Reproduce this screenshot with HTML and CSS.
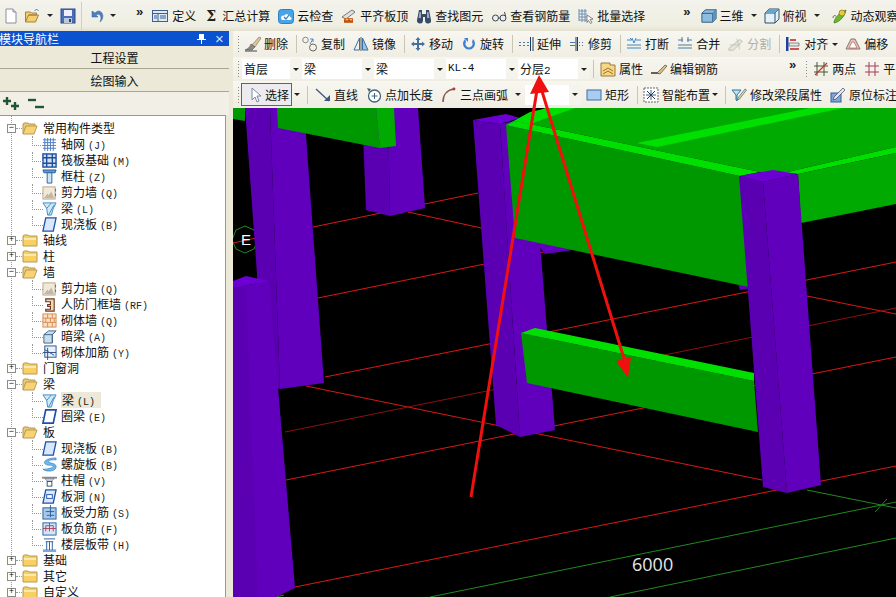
FILE: index.html
```html
<!DOCTYPE html>
<html lang="zh">
<head>
<meta charset="utf-8">
<title>模块导航栏</title>
<link rel="stylesheet" href="styles.css">
</head>
<body>
<svg class="defs" width="0" height="0">
  <symbol id="i-new" viewBox="0 0 16 16"><path d="M3 1h7l3 3v11H3z" fill="#fff" stroke="#8a8f9a"/><path d="M10 1v3h3" fill="#dde" stroke="#8a8f9a"/></symbol>
  <symbol id="i-open" viewBox="0 0 16 16"><path d="M1 14V4h5l1 1h5v2H4l-3 7h10l3-7H4" fill="#f3cf72" stroke="#a5813a"/><path d="M10 3c1-2 3-2 4 0" fill="none" stroke="#4a7fd0"/></symbol>
  <symbol id="i-save" viewBox="0 0 16 16"><rect x="1" y="1" width="14" height="14" fill="#4a6fb8" stroke="#2a4a8a"/><rect x="4" y="2" width="8" height="6" fill="#eef"/><rect x="4" y="10" width="8" height="5" fill="#bcc6dc"/><rect x="9" y="11" width="2" height="3" fill="#345"/></symbol>
  <symbol id="i-undo" viewBox="0 0 16 16"><path d="M3 3v6h6L7 7c3-2 5 0 5 4l-1 3c4-3 4-10-1-11-2 0-3 1-4 2z" fill="#4f7fc0" stroke="#345f9f" stroke-width=".5"/></symbol>
  <symbol id="i-define" viewBox="0 0 16 16"><rect x=".5" y="2.5" width="15" height="11" fill="#dfe8f6" stroke="#3c5f90"/><path d="M1 5.5h14M6 5.5v8M8 8h6M8 10h6M2 8h3M2 10h3" stroke="#3c5f90" fill="none"/></symbol>
  <symbol id="i-cloud" viewBox="0 0 16 16"><rect x=".5" y="1.5" width="15" height="14" rx="3" fill="#45a5e6" stroke="#2f7ec0"/><path d="M3 10c0-2 2-3 3-2 1-3 6-2 6 1 2 0 2 3 0 3H5c-2 0-2-2-2-2z" fill="#fff"/><path d="M6 9l2 2 3-4" fill="none" stroke="#2f7ec0" stroke-width="1.2"/></symbol>
  <symbol id="i-align" viewBox="0 0 16 16"><path d="M1 9l10-7 3 2-9 7z" fill="#dfe2e6" stroke="#777"/><path d="M3 10h9v5H3z" fill="#c9702a"/><path d="M5 11h2v2H5zm4 0h2v2H9z" fill="#e8d23a"/><path d="M3 13h9" stroke="#b22"/></symbol>
  <symbol id="i-binoc" viewBox="0 0 16 16"><path d="M3 2h3v4h4V2h3l2 10a2.500 2.500 0 0 1-6 1V9H7v4a2.500 2.500 0 0 1-6-1z" fill="#374a66"/><path d="M3.500 4h1.500v6H2.500zM11 4h1.500l1 6H11z" fill="#9ab"/></symbol>
  <symbol id="i-glass" viewBox="0 0 16 16"><circle cx="4.500" cy="10" r="3" fill="#e8eef8" stroke="#444"/><circle cx="12" cy="10" r="3" fill="#e8eef8" stroke="#444"/><path d="M7.500 10h1.500M14.500 8l-1-4" stroke="#444" fill="none"/></symbol>
  <symbol id="i-batch" viewBox="0 0 16 16"><path d="M1 1v12M1 3h8M1 6h8M1 9h8M1 12h8M4 1v13M7 1v13" stroke="#6f8fb8" fill="none"/><path d="M9 7l6 4-3 .5 2 3-1.500 1-2-3-1.500 2z" fill="#fff" stroke="#555" stroke-width=".7"/></symbol>
  <symbol id="i-cube" viewBox="0 0 18 16"><path d="M1 5l4-4h12v10l-4 4H1z" fill="#8dbde0" stroke="#2b5070"/><path d="M1 5h12v10M13 5l4-4" fill="none" stroke="#2b5070"/><path d="M13 5l4-4v10l-4 4z" fill="#5d93bd"/></symbol>
  <symbol id="i-cube2" viewBox="0 0 16 16"><path d="M1 5l4-4h10v10l-4 4H1z" fill="#e3f0f8" stroke="#2b5070"/><path d="M1 5h10v10M11 5l4-4" fill="none" stroke="#2b5070"/><path d="M5 1h10l-4 4H1z" fill="#6aa4cc"/></symbol>
  <symbol id="i-orbit" viewBox="0 0 16 16"><path d="M2 15c0-5 6-11 12-13-1 6-6 12-12 13z" fill="#6fb82e" stroke="#3a7a18" stroke-width=".7"/><circle cx="10" cy="5" r="3" fill="#e8c83c" stroke="#8a7415" stroke-width=".7"/><path d="M4 8c-2-1-3 0-3 2" fill="none" stroke="#666"/></symbol>
  <symbol id="i-del" viewBox="0 0 18 16"><path d="M8 9L15 1l2 1-6 9z" fill="#d9c9a0" stroke="#8a7a55" stroke-width=".7"/><path d="M7 8l4 3-3 3H1c3-1 5-3 6-6z" fill="#8a8a8a" stroke="#555" stroke-width=".6"/><path d="M1 15h12" stroke="#444"/></symbol>
  <symbol id="i-copy" viewBox="0 0 16 16"><circle cx="3.500" cy="4" r="2.800" fill="none" stroke="#888"/><circle cx="11" cy="11.500" r="3.500" fill="none" stroke="#666"/><path d="M8 3l3 0 0 3M8 8l3-5" fill="none" stroke="#5a86c0"/></symbol>
  <symbol id="i-mirror" viewBox="0 0 16 16"><path d="M6.500 2L1 14h5.500z" fill="none" stroke="#3a6ea8"/><path d="M9.500 2L15 14H9.500z" fill="#9cc0e4" stroke="#3a6ea8"/><path d="M8 1v14" stroke="#555"/></symbol>
  <symbol id="i-move" viewBox="0 0 16 16"><path d="M8 1l2.500 3H9v3h3V5.500L15 8l-3 2.500V9H9v3h1.500L8 15l-2.500-3H7V9H4v1.500L1 8l3-2.500V7h3V4H5.500z" fill="#44709f"/></symbol>
  <symbol id="i-rotate" viewBox="0 0 16 16"><path d="M4 3a6 6 0 1 0 8 0l-1 3a3.500 3.500 0 1 1-6 0z" fill="#3f80d0"/><path d="M3 2h4v4z" fill="#3f80d0"/></symbol>
  <symbol id="i-extend" viewBox="0 0 16 16"><path d="M1 6.500h2M5 6.500h2M9 6.500h2M1 9.500h2M5 9.500h2M9 9.500h2" stroke="#4a78a8"/><path d="M12.500 1v14M15 1v14" stroke="#233a5c"/></symbol>
  <symbol id="i-trim" viewBox="0 0 16 16"><path d="M1 6.500h5M1 9.500h5M10 6.500h1M13 6.500h1M10 9.500h1M13 9.500h1" stroke="#4a78a8"/><path d="M7 1v14M8.500 1v14" stroke="#233a5c"/></symbol>
  <symbol id="i-break" viewBox="0 0 16 16"><path d="M1 4h5l-2-2M15 4h-5M1 12h14M1 9h14" stroke="#3a88c8" fill="none"/><path d="M6 2l2 5M10 2l-2 5" stroke="#3a88c8"/></symbol>
  <symbol id="i-merge" viewBox="0 0 16 16"><path d="M1 4h5M10 4h5M1 12h14M1 9h14" stroke="#4a7aa0" fill="none"/><path d="M5 1v5M11 1v5" stroke="#4a7aa0"/></symbol>
  <symbol id="i-split" viewBox="0 0 18 16"><path d="M1 13L13 3l3 2-10 10H1z" fill="#e6e6e0" stroke="#bcbcb0"/><path d="M2 9h12M10 2l3 12" stroke="#c4c4b8"/></symbol>
  <symbol id="i-justify" viewBox="0 0 16 16"><rect x="1" y="1" width="2.500" height="14" fill="#1f3f9f"/><path d="M4 7h10v3H4z" fill="#e8e8e8" stroke="#444" stroke-width=".6"/><path d="M5 4h6M5 13h9" stroke="#c02020" stroke-width="1.500"/></symbol>
  <symbol id="i-offset" viewBox="0 0 16 16"><path d="M1 13L6 3h4l5 10z" fill="#f0c4b4" stroke="#7a7a7a"/><path d="M4 12l3-6h2l3 6z" fill="#fff" stroke="#c05050" stroke-width=".7"/></symbol>
  <symbol id="i-prop" viewBox="0 0 16 16"><path d="M1 2h9v2h5v11H1z" fill="#f3d88a" stroke="#9a7a35"/><path d="M3 10l5-3 5 3M3 13l5-3 5 3" stroke="#b06a20" fill="none"/></symbol>
  <symbol id="i-rebar" viewBox="0 0 16 16"><path d="M0 12h8" stroke="#222" stroke-width="1.400"/><path d="M6 12L14 4l2 1-7 8z" fill="#d9c08a" stroke="#5a4a28" stroke-width=".7"/></symbol>
  <symbol id="i-twopt" viewBox="0 0 16 16"><path d="M4 1v14M11 1v14M1 5h14M1 11h14" stroke="#405a30" fill="none"/><path d="M2 14L14 2" stroke="#c8352a" stroke-width="1.300"/></symbol>
  <symbol id="i-flat" viewBox="0 0 16 16"><path d="M5 1v14M11 1v14M1 5h14M1 11h14" stroke="#a83a5a" fill="none"/></symbol>
  <symbol id="i-cursor" viewBox="0 0 16 16"><path d="M4 1v12l3-3 2 5 2-1-2-5h4z" fill="#fff" stroke="#7a8aa0"/></symbol>
  <symbol id="i-line" viewBox="0 0 16 16"><path d="M1 2l13 12" stroke="#38587e" stroke-width="1.300"/><path d="M9 14h6V8z" fill="#38587e"/></symbol>
  <symbol id="i-ptlen" viewBox="0 0 16 16"><circle cx="8.500" cy="9" r="6" fill="#fff" stroke="#44627f" stroke-width="1.300"/><path d="M8.500 6v6M5.500 9h6" stroke="#44627f"/><path d="M1 1l4 1-2 3z" fill="#44627f"/></symbol>
  <symbol id="i-arc" viewBox="0 0 16 16"><path d="M2 15C2 8 6 3 13 2" fill="none" stroke="#8a5a4a" stroke-width="1.600"/><circle cx="13" cy="2" r="1.400" fill="#c03030"/></symbol>
  <symbol id="i-rect" viewBox="0 0 16 16"><rect x="1" y="3" width="14" height="10" fill="#a9cdf0" stroke="#3f6da0"/></symbol>
  <symbol id="i-smart" viewBox="0 0 16 16"><rect x="1" y="1" width="14" height="14" fill="#fff" stroke="#666" stroke-dasharray="2 1"/><path d="M8 3v10M3 8h10" stroke="#2f6aa0"/><path d="M8 8l4 4M8 8l-4-4M8 8l4-4M8 8l-4 4" stroke="#3a3a3a"/></symbol>
  <symbol id="i-modify" viewBox="0 0 16 16"><path d="M1 3h9l-4 5v6l-1-1V8z" fill="#bfe3f0" stroke="#2f7a9a"/><path d="M7 11l7-9 1.500 1-7 9-2 1z" fill="#d8e6a0" stroke="#557" stroke-width=".7"/></symbol>
  <symbol id="i-label" viewBox="0 0 16 16"><rect x="1" y="6" width="10" height="9" fill="#7ea6d8" stroke="#345f9a"/><path d="M4 10L13 1l2 2-9 9-3 1z" fill="#dfe6f0" stroke="#446" stroke-width=".7"/></symbol>
  <symbol id="t-expand" viewBox="0 0 16 16"><path d="M4 1v8M0 5h8" stroke="#225533" stroke-width="2.400"/><path d="M12 6v8M8 10h8" stroke="#225533" stroke-width="2.400"/></symbol>
  <symbol id="t-collapse" viewBox="0 0 16 16"><path d="M0 4h8" stroke="#225533" stroke-width="2.400"/><path d="M7 11h9" stroke="#225533" stroke-width="2.400"/></symbol>
  <symbol id="f-closed" viewBox="0 0 16 14"><path d="M1 3l1-1h4l1 1h8v10H1z" fill="#f7cf62" stroke="#b89a52"/><path d="M2 5h12v2H2z" fill="#fbe9ae"/></symbol>
  <symbol id="f-open" viewBox="0 0 16 14"><path d="M1 13V3l1-1h4l1 1h6v2" fill="#e9c878" stroke="#b89a52"/><path d="M1 13l3-8h11l-3 8z" fill="#f7d473" stroke="#b89a52"/></symbol>
  <symbol id="c-grid" viewBox="0 0 16 16"><path d="M3 1v14M6 1v14M9 1v14M12 1v14M1 3h14M1 6h14M1 9h14M1 12h14" stroke="#4a78c0" fill="none"/></symbol>
  <symbol id="c-raft" viewBox="0 0 16 16"><rect x="1" y="1" width="14" height="14" fill="#cfe0f4" stroke="#1f4f9a" stroke-width="1.500"/><path d="M1 5h14M1 11h14M5 1v14M11 1v14" stroke="#1f4f9a" stroke-width="1.500"/></symbol>
  <symbol id="c-col" viewBox="0 0 16 16"><path d="M1 1h14l-1 3H2z" fill="#5a9ad8" stroke="#2a5f9a"/><path d="M5.500 4h5v11h-5z" fill="#cfe4f6" stroke="#2a5f9a"/></symbol>
  <symbol id="c-wall" viewBox="0 0 16 16"><rect x="1" y="2" width="13" height="13" fill="#f0e8d8" stroke="#b8a888"/><path d="M2 14l4-5 1 2 3-4 3 7z" fill="#c2b8a6"/><path d="M14 4h1v3h-1zm0 5h1v3h-1z" fill="#666"/></symbol>
  <symbol id="c-beam" viewBox="0 0 16 16"><path d="M1 2h14l-3 6-2 7H6L5 8z" fill="#d4e8f6" stroke="#3a8ac0"/><path d="M5 8l5-6M7 15l6-11" stroke="#3a8ac0"/></symbol>
  <symbol id="c-slab" viewBox="0 0 16 16"><path d="M4 1h11l-3 14H1z" fill="#d9e8fa" stroke="#1f4fa8" stroke-width="1.400"/></symbol>
  <symbol id="c-door" viewBox="0 0 16 16"><path d="M4 2h9v13H4v-2h5v-3H6V8h3V5H4z" fill="#f0d8b8" stroke="#6a3a20" stroke-width="1.200"/></symbol>
  <symbol id="c-brick" viewBox="0 0 16 16"><rect x="1" y="1" width="14" height="14" fill="#fae0c4" stroke="#d88a50"/><path d="M1 5.500h14M1 10h14M6 1v4.500M11 1v4.500M4 5.500V10M9 5.500V10M13 5.500V10M6 10v5M11 10v5" stroke="#d88a50"/></symbol>
  <symbol id="c-dark" viewBox="0 0 16 16"><path d="M2 6l5-4h8l-4 4v9H2z" fill="#c6dff0" stroke="#44627f"/><path d="M2 6h9l4-4M11 6v9" fill="none" stroke="#44627f"/></symbol>
  <symbol id="c-mason" viewBox="0 0 16 16"><rect x="3" y="1" width="12" height="12" fill="#e8f0fa" stroke="#2a4f8a"/><path d="M1 8h14M6 3v13M3 5l10 6" stroke="#2a4f8a"/></symbol>
  <symbol id="c-ring" viewBox="0 0 16 16"><path d="M4 1h11l-3 14H1z" fill="#fff" stroke="#1f4fa8" stroke-width="1.800"/></symbol>
  <symbol id="c-spiral" viewBox="0 0 16 16"><path d="M15 1C7 1 1 4 3 7s10 1 9 3-7 3-11 3c3 3 13 3 14-2S7 7 7 5s4-2 8-2z" fill="#6fb8ea" stroke="#2a78c0" stroke-width=".7"/></symbol>
  <symbol id="c-cap" viewBox="0 0 16 16"><path d="M0 4h16v2H0z" fill="#888"/><path d="M3 6h10l-3 3H6z" fill="#c8d4e0" stroke="#667" stroke-width=".6"/><rect x="5.500" y="9" width="5" height="5" fill="#fff" stroke="#2a4a7a"/></symbol>
  <symbol id="c-hole" viewBox="0 0 16 16"><path d="M4 1h11l-3 14H1z" fill="#d9e8fa" stroke="#1f4fa8" stroke-width="1.400"/><rect x="5" y="6" width="6" height="4" fill="#fff" stroke="#1f4fa8"/></symbol>
  <symbol id="c-bar" viewBox="0 0 16 16"><rect x="1" y="3" width="14" height="12" fill="#a8c8ec" stroke="#2a5f9a"/><path d="M9 0v13M4 7h9M5 11h8" stroke="#2a5f9a" fill="none"/></symbol>
  <symbol id="c-neg" viewBox="0 0 16 16"><rect x="1" y="2" width="14" height="13" fill="#d2e4f8" stroke="#2a5f9a"/><path d="M4 11V5h8v6M1 8h14M8 2v9" stroke="#b0435a" fill="none"/></symbol>
  <symbol id="c-band" viewBox="0 0 16 16"><path d="M2 2h12M4 5h8M1 14h14M5 5v9M8 5v9M11 5v9" stroke="#2a5f9a" fill="none"/><rect x="1" y="14" width="14" height="2" fill="#7fa8d8"/></symbol>
</svg>

<header class="toolbar top">
  <span class="icon"><svg><use href="#i-new"/></svg></span>
  <span class="icon after-new"><svg><use href="#i-open"/></svg></span>
  <i class="caret after-open"></i>
  <span class="icon after-caret"><svg><use href="#i-save"/></svg></span>
  <span class="sep top-sep"></span>
  <span class="icon"><svg><use href="#i-undo"/></svg></span>
  <i class="caret after-undo"></i>
  <b class="more more-a">»</b>
  <div class="tool"><span class="icon"><svg><use href="#i-define"/></svg></span><span class="wide">定义</span></div>
  <div class="tool"><span class="sigma">Σ</span>汇总计算</div>
  <div class="tool"><span class="icon"><svg><use href="#i-cloud"/></svg></span>云检查</div>
  <div class="tool"><span class="icon"><svg><use href="#i-align"/></svg></span>平齐板顶</div>
  <div class="tool"><span class="icon"><svg><use href="#i-binoc"/></svg></span>查找图元</div>
  <div class="tool"><span class="icon"><svg><use href="#i-glass"/></svg></span>查看钢筋量</div>
  <div class="tool"><span class="icon"><svg><use href="#i-batch"/></svg></span>批量选择</div>
  <b class="more more-b">»</b>
  <div class="tool tool-tight view-first"><span class="icon"><svg><use href="#i-cube"/></svg></span>三维</div>
  <i class="caret view-caret"></i>
  <div class="tool tool-tight"><span class="icon"><svg><use href="#i-cube2"/></svg></span>俯视</div>
  <i class="caret view-caret"></i>
  <div class="tool orbit"><span class="icon"><svg><use href="#i-orbit"/></svg></span>动态观察</div>
</header>

<main class="workspace">
  <aside class="nav">
    <div class="nav-title"><span class="nav-name">模块导航栏</span><span class="pin">
      <svg width="9" height="11" viewBox="0 0 9 11"><path d="M2 1h5v5h2v1H5v4H4V7H0V6h2z" fill="#fff"/></svg></span><span class="close">×</span></div>
    <button class="nav-btn" type="button">工程设置</button>
    <button class="nav-btn" type="button">绘图输入</button>
    <div class="nav-tools">
      <svg class="nt"><use href="#t-expand"/></svg>
      <svg class="nt"><use href="#t-collapse"/></svg>
    </div>
    <ul class="tree">
      <li class="row"><i class="box">−</i><svg class="folder"><use href="#f-open"/></svg><span>常用构件类型</span></li>
      <li class="row leaf"><svg class="leaf-ic"><use href="#c-grid"/></svg><span>轴网<em>(J)</em></span></li>
      <li class="row leaf"><svg class="leaf-ic"><use href="#c-raft"/></svg><span>筏板基础<em>(M)</em></span></li>
      <li class="row leaf"><svg class="leaf-ic"><use href="#c-col"/></svg><span>框柱<em>(Z)</em></span></li>
      <li class="row leaf"><svg class="leaf-ic"><use href="#c-wall"/></svg><span>剪力墙<em>(Q)</em></span></li>
      <li class="row leaf"><svg class="leaf-ic"><use href="#c-beam"/></svg><span>梁<em>(L)</em></span></li>
      <li class="row leaf"><svg class="leaf-ic"><use href="#c-slab"/></svg><span>现浇板<em>(B)</em></span></li>
      <li class="row"><i class="box">+</i><svg class="folder"><use href="#f-closed"/></svg><span>轴线</span></li>
      <li class="row"><i class="box">+</i><svg class="folder"><use href="#f-closed"/></svg><span>柱</span></li>
      <li class="row"><i class="box">−</i><svg class="folder"><use href="#f-open"/></svg><span>墙</span></li>
      <li class="row leaf"><svg class="leaf-ic"><use href="#c-wall"/></svg><span>剪力墙<em>(Q)</em></span></li>
      <li class="row leaf"><svg class="leaf-ic"><use href="#c-door"/></svg><span>人防门框墙<em>(RF)</em></span></li>
      <li class="row leaf"><svg class="leaf-ic"><use href="#c-brick"/></svg><span>砌体墙<em>(Q)</em></span></li>
      <li class="row leaf"><svg class="leaf-ic"><use href="#c-dark"/></svg><span>暗梁<em>(A)</em></span></li>
      <li class="row leaf"><svg class="leaf-ic"><use href="#c-mason"/></svg><span>砌体加筋<em>(Y)</em></span></li>
      <li class="row"><i class="box">+</i><svg class="folder"><use href="#f-closed"/></svg><span>门窗洞</span></li>
      <li class="row"><i class="box">−</i><svg class="folder"><use href="#f-open"/></svg><span>梁</span></li>
      <li class="row leaf"><svg class="leaf-ic"><use href="#c-beam"/></svg><span class="current">梁<em>(L)</em></span></li>
      <li class="row leaf"><svg class="leaf-ic"><use href="#c-ring"/></svg><span>圈梁<em>(E)</em></span></li>
      <li class="row"><i class="box">−</i><svg class="folder"><use href="#f-open"/></svg><span>板</span></li>
      <li class="row leaf"><svg class="leaf-ic"><use href="#c-slab"/></svg><span>现浇板<em>(B)</em></span></li>
      <li class="row leaf"><svg class="leaf-ic"><use href="#c-spiral"/></svg><span>螺旋板<em>(B)</em></span></li>
      <li class="row leaf"><svg class="leaf-ic"><use href="#c-cap"/></svg><span>柱帽<em>(V)</em></span></li>
      <li class="row leaf"><svg class="leaf-ic"><use href="#c-hole"/></svg><span>板洞<em>(N)</em></span></li>
      <li class="row leaf"><svg class="leaf-ic"><use href="#c-bar"/></svg><span>板受力筋<em>(S)</em></span></li>
      <li class="row leaf"><svg class="leaf-ic"><use href="#c-neg"/></svg><span>板负筋<em>(F)</em></span></li>
      <li class="row leaf"><svg class="leaf-ic"><use href="#c-band"/></svg><span>楼层板带<em>(H)</em></span></li>
      <li class="row"><i class="box">+</i><svg class="folder"><use href="#f-closed"/></svg><span>基础</span></li>
      <li class="row"><i class="box">+</i><svg class="folder"><use href="#f-closed"/></svg><span>其它</span></li>
      <li class="row"><i class="box">+</i><svg class="folder"><use href="#f-closed"/></svg><span>自定义</span></li>
    </ul>
  </aside>

  <section class="editor">
    <div class="toolbar edit">
      <i class="grip"></i>
      <div class="tool"><span class="icon icon-18"><svg><use href="#i-del"/></svg></span>删除</div>
      <span class="sep"></span>
      <div class="tool"><span class="icon"><svg><use href="#i-copy"/></svg></span>复制</div>
      <div class="tool"><span class="icon"><svg><use href="#i-mirror"/></svg></span>镜像</div>
      <span class="sep"></span>
      <div class="tool"><span class="icon"><svg><use href="#i-move"/></svg></span>移动</div>
      <div class="tool"><span class="icon"><svg><use href="#i-rotate"/></svg></span>旋转</div>
      <span class="sep"></span>
      <div class="tool"><span class="icon"><svg><use href="#i-extend"/></svg></span>延伸</div>
      <div class="tool"><span class="icon"><svg><use href="#i-trim"/></svg></span>修剪</div>
      <span class="sep"></span>
      <div class="tool"><span class="icon"><svg><use href="#i-break"/></svg></span>打断</div>
      <div class="tool"><span class="icon"><svg><use href="#i-merge"/></svg></span>合并</div>
      <div class="tool disabled"><span class="icon"><svg><use href="#i-split"/></svg></span>分割</div>
      <span class="sep"></span>
      <div class="tool tool-caret"><span class="icon"><svg><use href="#i-justify"/></svg></span>对齐</div>
      <i class="caret caret-edit"></i>
      <div class="tool"><span class="icon"><svg><use href="#i-offset"/></svg></span>偏移</div>
      <span class="sep"></span>
    </div>

    <div class="toolbar selects">
      <i class="grip grip-combo"></i>
      <div class="combo combo-first"><span class="field">首层</span><span class="drop"><i class="caret"></i></span></div>
      <div class="combo"><span class="field">梁</span><span class="drop"><i class="caret"></i></span></div>
      <div class="combo"><span class="field">梁</span><span class="drop"><i class="caret"></i></span></div>
      <div class="combo"><span class="field mono">KL-4</span><span class="drop"><i class="caret"></i></span></div>
      <div class="combo"><span class="field">分层<span class="mono">2</span></span><span class="drop"><i class="caret"></i></span></div>
      <span class="sep sep-combo"></span>
      <div class="tool"><span class="icon"><svg><use href="#i-prop"/></svg></span>属性</div>
      <div class="tool"><span class="icon"><svg><use href="#i-rebar"/></svg></span>编辑钢筋</div>
      <b class="more more-c">»</b>
      <i class="grip grip-c"></i>
      <div class="tool"><span class="icon"><svg><use href="#i-twopt"/></svg></span>两点</div>
      <div class="tool"><span class="icon"><svg><use href="#i-flat"/></svg></span>平齐</div>
    </div>

    <div class="toolbar draw">
      <i class="grip"></i>
      <div class="pick"><span class="icon"><svg><use href="#i-cursor"/></svg></span>选择</div>
      <i class="caret caret-pick"></i>
      <span class="sep sep-pick"></span>
      <div class="tool"><span class="icon"><svg><use href="#i-line"/></svg></span>直线</div>
      <div class="tool"><span class="icon"><svg><use href="#i-ptlen"/></svg></span>点加长度</div>
      <div class="tool tool-caret"><span class="icon"><svg><use href="#i-arc"/></svg></span>三点画弧</div>
      <i class="caret caret-arc"></i>
      <div class="combo combo-draw"><span class="field"></span><span class="drop"><i class="caret"></i></span></div>
      <div class="tool"><span class="icon"><svg><use href="#i-rect"/></svg></span>矩形</div>
      <span class="sep"></span>
      <div class="tool tool-caret"><span class="icon"><svg><use href="#i-smart"/></svg></span>智能布置</div>
      <i class="caret caret-smart"></i>
      <span class="sep"></span>
      <div class="tool"><span class="icon"><svg><use href="#i-modify"/></svg></span>修改梁段属性</div>
      <div class="tool"><span class="icon"><svg><use href="#i-label"/></svg></span>原位标注</div>
    </div>

    <div class="canvas">
      <svg class="scene" viewBox="233 108 663 489" preserveAspectRatio="xMinYMin slice">
        <rect x="233" y="108" width="663" height="489" fill="#000"/>
        <g class="red">
          <path d="M313 227L478 193M408 212L541 241M318 298L563 248M325 377L896 262M286 480L896 357M295 587L896 466M306 386L762 480M807 296L896 314"/>
          <path class="faint" d="M285 432L896 308"/>
          <path d="M233 243L256 238"/>
        </g>
        <g class="grn">
          <path d="M430 597L896 502M610 597L896 538M807 490L896 508M875 512L887 499M276 597L284 595"/>
        </g>
        <polygon class="ring-e" points="245,226 254,230 258,240 254,249 245,253 236,249 232,240 236,230"/>
        <text class="axis" x="246" y="245">E</text>
        <polygon class="pu-a" points="362,108 388,108 390,216 366,210"/>
        <polygon class="pu-b" points="388,108 418,108 425,208 390,216"/>
        <polygon class="pu-a" points="245,108 270,108 280,389 265,385"/>
        <polygon class="pu-b" points="270,108 304,108 324,383 280,389"/>
        <polygon class="g-a" points="277,108 376,108 380,148 278,128"/>
        <polygon class="g-b" points="376,108 394,108 396,146 380,148"/>
        <polygon class="g-a" points="233,108 245,108 245,121 233,119"/>
        <polygon class="pu-b" points="233,288 269,281 295,588 276,597 233,597"/>
        <polygon class="pu-a" points="233,288 246,285 258,597 233,597"/>
        <polygon class="pu-t" points="233,281 246,276 269,281 233,288"/>
        <polygon class="pu-a" points="473,120 500,124 520,437 496,425"/>
        <polygon class="pu-b" points="500,124 530,118 555,430 520,437"/>
        <polygon class="pu-t" points="473,120 506,114 520,118 500,124"/>
        <polygon class="pu-b" points="530,235 573,250 545,254"/>
        <polygon class="pu-b" points="738,284 752,288 740,290"/>
        <polygon class="g-b" points="516,121 545,108 896,108 896,147 783,173 760,172"/>
        <polygon class="g-t" points="506,125 530,112 548,108 575,108 530,124 516,121"/>
        <polygon class="g-a" points="506,125 740,176 763,290 515,238"/>
        <polygon class="g-t" points="506,125 516,121 760,172 740,176"/>
        <polygon class="g-t" points="637,143 810,108 843,108 657,147"/>
        <polygon class="g-t" points="783,173 896,147 896,153 798,174"/>
        <polygon class="g-b" points="798,174 896,153 896,204 801,223"/>
        <polygon class="g-a" points="521,333 754,381 758,432 527,383"/>
        <polygon class="g-t" points="521,333 535,328 754,373 754,381"/>
        <polygon class="pu-a" points="739,176 763,182 787,493 763,487"/>
        <polygon class="pu-b" points="763,182 798,174 821,485 787,493"/>
        <polygon class="pu-t" points="739,176 773,170 798,174 763,182"/>
        <text class="dim" x="632" y="571">6000</text>
      </svg>
    </div>
  </section>
</main>

<svg class="annot" viewBox="0 0 896 597">
  <path d="M471 497L537 90M541 88L626 365"/>
  <polygon points="539,75 530,94 549,92"/>
  <polygon points="628,378 616,361 631,357"/>
</svg>
</body>
</html>
```

FILE: styles.css
```css
* { box-sizing: border-box; }
html, body { margin: 0; height: 100%; }
body {
  position: relative;
  width: 896px;
  height: 597px;
  overflow: hidden;
  display: flex;
  flex-direction: column;
  background: #ece9d8;
  color: #111;
  font: 12px/16px "Noto Sans CJK SC", "Liberation Sans", sans-serif;
}
.defs { position: absolute; }

/* toolbars */
.toolbar {
  display: flex;
  align-items: center;
  white-space: nowrap;
  overflow: hidden;
  flex: none;
  background: linear-gradient(#f7f6f0, #f0eee3);
}
.top { height: 31px; padding-left: 3px; background: linear-gradient(#f4f3ec, #efeee2 85%, #e4e1d0); }
.edit { height: 26px; padding-left: 5px; }
.selects { height: 24px; padding-left: 5px; }
.draw { height: 27px; padding-left: 5px; }
.icon { flex: none; display: block; width: 16px; height: 16px; }
.icon svg { display: block; width: 100%; height: 100%; overflow: visible; }
.icon-18 { width: 18px; margin-right: -1px; }
.tool { flex: none; display: flex; align-items: center; gap: 3px; margin-right: 8px; }
.tool-caret { margin-right: 0; }
.tool-tight { margin-right: 0; }
.disabled { color: #b0b0a8; }
.wide { margin-left: 1px; margin-right: 1px; }
.sigma { width: 17px; font: bold 14px "DejaVu Serif", serif; color: #222; padding-left: 1px; margin-right: -3px; }
.sep { flex: none; width: 1px; height: 18px; background: #c8c5b2; margin-right: 5px; }
.top-sep { height: 28px; margin: 0 7px 0 5px; background: #d2cfbd; }
.caret {
  flex: none;
  display: block;
  width: 0;
  height: 0;
  border-left: 3px solid transparent;
  border-right: 3px solid transparent;
  border-top: 3px solid #222;
}
.more { flex: none; font: bold 13px/10px "Liberation Sans", sans-serif; margin-top: -8px; color: #222; }
.after-new { margin-left: 5px; width: 17px; }
.after-open { margin-left: 6px; }
.after-caret { margin-left: 7px; }
.after-undo { margin-left: 5px; }
.more-a { margin-left: 20px; margin-right: 9px; }
.more-b { margin-left: 30px; margin-right: 10px; }
.view-caret { margin-left: 7px; margin-right: 7px; }
.orbit { margin-left: 5px; }
.grip {
  flex: none;
  display: block;
  width: 1px;
  height: 16px;
  margin-right: 5px;
  background: repeating-linear-gradient(#8f8c7c 0 1px, transparent 1px 3px);
}
.grip-combo { margin-right: 3px; }

/* layout */
.workspace { flex: 1; display: flex; min-height: 0; }
.nav { flex: none; width: 233px; display: flex; flex-direction: column; padding-right: 4px; }
.editor { flex: 1; min-width: 0; display: flex; flex-direction: column; }
.canvas { flex: 1; min-height: 0; background: #000; }
.scene { display: block; width: 663px; height: 489px; }

/* navigation panel */
.nav-title {
  flex: none;
  height: 15px;
  display: flex;
  align-items: center;
  background: #0a52d0;
  color: #fff;
  line-height: 15px;
}
.nav-name { margin-left: -1px; flex: 1; }
.pin { width: 9px; height: 11px; margin-right: 9px; }
.pin svg { display: block; }
.close { width: 12px; margin-right: 2px; font: 15px/15px "Liberation Sans", sans-serif; color: #cfe0ff; }
.nav-btn {
  flex: none;
  height: 22px;
  margin: 1px 0 0;
  padding: 0;
  border: 0;
  border-bottom: 1px solid #a9a692;
  background: #ece9d8;
  color: #111;
  font: inherit;
}
.nav-tools { flex: none; height: 23px; display: flex; align-items: center; gap: 9px; padding: 0 0 0 3px; background: #f2f0e6; }
.nt { width: 16px; height: 16px; display: block; }
.tree {
  flex: 1;
  min-height: 0;
  overflow: hidden;
  list-style: none;
  margin: 0 3px 0 0;
  padding: 4px 0 0;
  background:
    repeating-linear-gradient(#9a9a9a 0 1px, transparent 1px 2px) 11px 0 / 1px 100% no-repeat,
    #fff;
  border-top: 1px solid #8a9ab0;
  border-right: 1px solid #8a9ab0;
}
.row { position: relative; height: 16px; display: flex; align-items: center; padding-left: 22px; gap: 5px; white-space: nowrap; }
.row em { font: 10px "Liberation Mono", monospace; margin-left: 3px; color: #222; }
.box {
  position: absolute;
  left: 7px;
  top: 4px;
  width: 9px;
  height: 9px;
  background: #fff;
  border: 1px solid #8a8a8a;
  font: 9px/7px "Liberation Mono", monospace;
  text-align: center;
  color: #111;
}
.row:not(.leaf)::before {
  content: "";
  position: absolute;
  left: 16px;
  top: 8px;
  width: 6px;
  border-top: 1px dotted #999;
}
.folder { flex: none; width: 16px; height: 14px; }
.leaf { padding-left: 42px; }
.leaf::before {
  content: "";
  position: absolute;
  left: 32px;
  top: 0;
  width: 10px;
  height: 9px;
  border-left: 1px dotted #999;
  border-bottom: 1px dotted #999;
}
.leaf-ic { flex: none; width: 15px; height: 15px; overflow: visible; }
.leaf span { margin-left: -1px; }
.current { background: #ece9d8; padding-right: 6px; margin-left: -2px; padding-left: 1px; }

/* combos */
.combo { flex: none; display: flex; width: 72px; height: 20px; }
.combo-first { width: 60px; }
.field { flex: 1; min-width: 0; background: #fff; padding-left: 2px; line-height: 19px; }
.drop { flex: none; width: 12px; display: flex; align-items: center; justify-content: center; background: #f4f3ec; }
.mono { font-family: "Liberation Mono", monospace; font-size: 11px; }
.sep-combo { margin-left: 3px; margin-right: 6px; }
.more-c { margin-left: 63px; margin-right: 10px; }
.grip-c { margin-right: 6px; }

/* draw row */
.pick {
  flex: none;
  width: 51px;
  height: 23px;
  display: flex;
  align-items: center;
  gap: 1px;
  padding-left: 6px;
  margin-left: -3px;
  background: #ecebf0;
  border: 1px solid #316ac5;
}
.caret-pick { margin-left: 2px; }
.sep-pick { margin-left: 7px; margin-right: 7px; }
.caret-arc { margin-left: 7px; margin-right: 4px; }
.caret-edit { margin-left: 4px; margin-right: 7px; }
.caret-smart { margin-left: 2px; margin-right: 7px; }
.combo-draw { width: 56px; margin-right: 5px; }

/* scene */
.red path { stroke: #d81818; stroke-width: 1; fill: none; }
.red .faint { stroke: #8c1010; }
.grn path { stroke: #1f8a1f; stroke-width: 1; fill: none; }
.ring-e { fill: none; stroke: #1f8a1f; stroke-width: 1; }
.axis { fill: #fff; font: 15px "Liberation Sans", sans-serif; text-anchor: middle; }
.dim { fill: #e8e8e8; font: 18px "Open Sans", sans-serif; }
.pu-a { fill: #5a00b2; }
.pu-b { fill: #6000bd; }
.pu-t { fill: #6c00d4; }
.g-a { fill: #009800; }
.g-b { fill: #00aa00; }
.g-t { fill: #00e000; }

/* annotation arrows lie over everything */
.annot { position: absolute; left: 0; top: 0; width: 896px; height: 597px; pointer-events: none; }
.annot path { stroke: #f01010; stroke-width: 3; fill: none; }
.annot polygon { fill: #f01010; }
```
